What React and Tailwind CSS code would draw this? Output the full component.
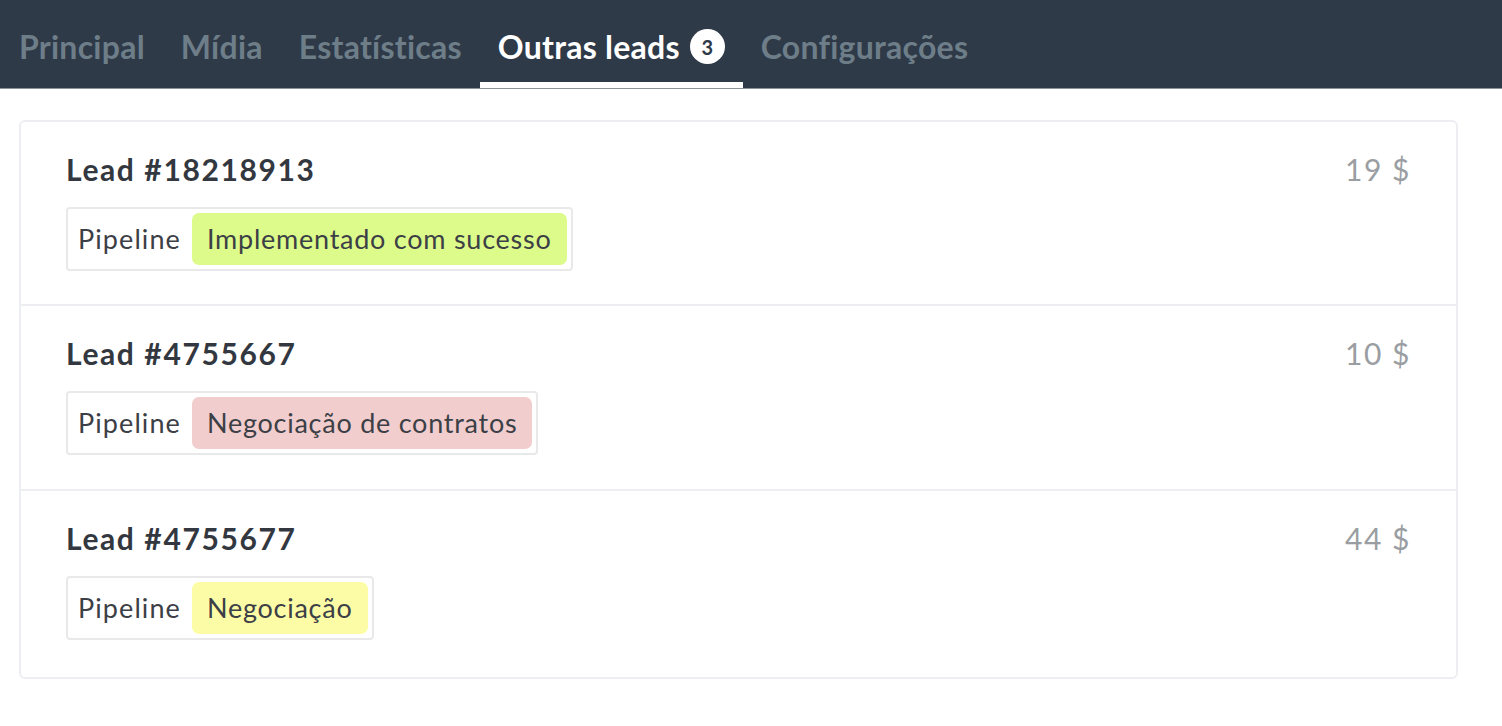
import React from 'react';

const tabs = [
    { label: 'Principal' },
    { label: 'Mídia' },
    { label: 'Estatísticas' },
    { label: 'Outras leads', count: 3, active: true },
    { label: 'Configurações' },
];

const leads = [
    { id: '18218913', price: '19 $', stage: 'Implementado com sucesso', color: 'bg-[#dcfb8a]' },
    { id: '4755667', price: '10 $', stage: 'Negociação de contratos', color: 'bg-[#f1cdcd]' },
    { id: '4755677', price: '44 $', stage: 'Negociação', color: 'bg-[#fdfca6]' },
];

const App = () => {
    return (
        <div className="min-h-screen bg-white font-['Lato',sans-serif]">
            {/* Tabs */}
            <div className="h-[89px] bg-[#2e3a48] border-b border-[#8a949c] flex items-end pl-[1px]">
                {tabs.map((tab) => (
                    <div
                        key={tab.label}
                        className={`h-[83px] px-[18px] flex items-center gap-[10px] text-[32px] font-bold tracking-[0.25px] ${
                            tab.active ? 'text-white border-b-[6px] border-white pt-[6px]' : 'text-[#6e7e89]'
                        }`}
                    >
                        <span>{tab.label}</span>
                        {tab.count && (
                            <span className="h-[35px] w-[35px] rounded-full bg-white text-[#2e3a48] text-[20px] tracking-normal flex items-center justify-center">
                                {tab.count}
                            </span>
                        )}
                    </div>
                ))}
            </div>

            {/* Leads */}
            <div className="ml-[19px] mt-[31px] w-[1439px] border-2 border-[#eceef1] rounded-[6px]">
                {leads.map((lead, i) => (
                    <div
                        key={lead.id}
                        className={`px-[45px] pt-[29px] flex justify-between ${
                            i > 0 ? 'border-t-2 border-[#eceef1]' : ''
                        } ${i === leads.length - 1 ? 'pb-[37px]' : i === 0 ? 'pb-[33px]' : 'pb-[34px]'}`}
                    >
                        <div>
                            <p className="text-[30px] leading-[36px] font-bold text-[#333840] tracking-[1.6px]">Lead #{lead.id}</p>
                            <div className="mt-[20px] inline-flex items-center gap-[11px] border-2 border-[#e9e9e9] rounded-[4px] p-[4px] pl-[10px]">
                                <span className="text-[27px] text-[#3c4046] tracking-[1.1px]">Pipeline</span>
                                <span className={`${lead.color} rounded-[7px] px-[15px] h-[52px] flex items-center text-[27px] text-[#3c4046] tracking-[0.75px]`}>
                                    {lead.stage}
                                </span>
                            </div>
                        </div>
                        <p className="text-[30px] leading-[36px] text-[#9a9ea2] tracking-[1.5px]">{lead.price}</p>
                    </div>
                ))}
            </div>
        </div>
    );
};

export default App;
